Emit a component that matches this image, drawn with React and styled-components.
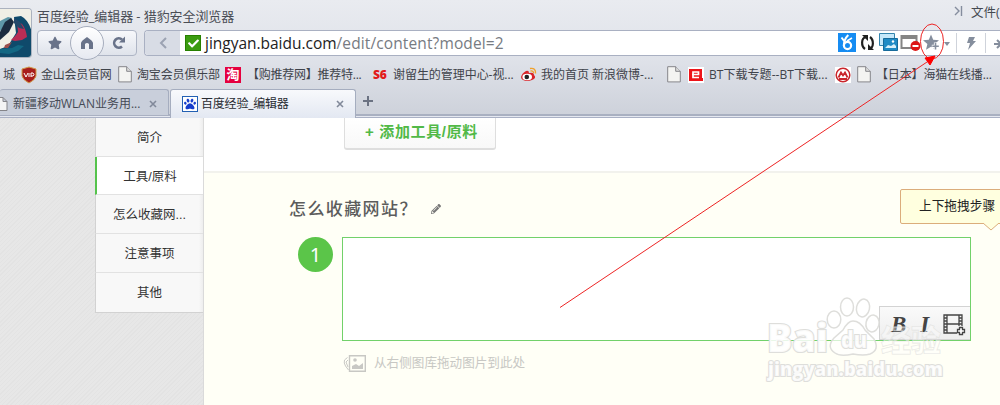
import styled, { createGlobalStyle } from "styled-components";
import {
  FaStar,
  FaCheck,
  FaPaw,
  FaPencilAlt,
} from "react-icons/fa";

const sidebar = ["简介", "工具/原料", "怎么收藏网...", "注意事项", "其他"];

const bookmarks = [
  { text: "城", x: 3, width: 21 },
  { icon: "vip", text: "金山会员官网", x: 20, width: 97, spacing: -0.25 },
  { icon: "doc", text: "淘宝会员俱乐部", x: 19, width: 107, spacing: -0.15 },
  { icon: "tao", text: "【购推荐网】推荐特...", x: 22, width: 148, spacing: -0.25 },
  { icon: "s6", text: "谢留生的管理中心-视...", x: 20, width: 147, spacing: -0.05 },
  { icon: "weibo", text: "我的首页 新浪微博-...", x: 21, width: 147, spacing: 0 },
  { icon: "doc", width: 21 },
  { icon: "e", text: "BT下载专题--BT下载...", x: 21, width: 147, spacing: 0.05 },
  { icon: "cmb", width: 22 },
  { icon: "doc", text: "【日本】海猫在线播...", x: 19, width: 143, spacing: -0.15 },
];

function BookmarkIcon({ name }) {
  switch (name) {
    case "vip":
      return (
        <svg width="16" height="18" viewBox="0 0 16 18">
          <path d="M1 3 8 1l7 2v7q-1 4-7 7-6-3-7-7z" fill="#a81e1c" stroke="#d29b4b" />
          <path d="m3 7 2 4 2-4m1 0v4m2 0V7h2q2 2 0 3h-2" fill="none" stroke="#fff" />
        </svg>
      );
    case "doc":
      return (
        <svg width="14" height="17" viewBox="0 0 14 17">
          <path d="M.7.7h8l4.6 4.6v10.6H.7z" fill="#f4f4f2" stroke="#85858a" />
          <path d="M8.7.7v4.6h4.6" fill="#ddd" stroke="#85858a" />
        </svg>
      );
    case "tao":
      return <TaoIcon>淘</TaoIcon>;
    case "s6":
      return <SixIcon>S6</SixIcon>;
    case "weibo":
      return (
        <svg width="17" height="16" viewBox="0 0 17 16">
          <path d="M1 10q1-4 5-6 3-1 3 2 5-1 5 2 3 3-2 5-5 2-9 0-2-1-2-3z" fill="#d9252a" />
          <ellipse cx="7.2" cy="10" rx="4.8" ry="3.2" fill="#fff" />
          <circle cx="6.8" cy="10" r="2.3" fill="#222" />
          <path d="M10 1.5q6-1 5.5 5M10.5 4q3-.5 3 2" fill="none" stroke="#f0a12b" strokeWidth="1.4" />
        </svg>
      );
    case "e":
      return (
        <svg width="16" height="16" viewBox="0 0 16 16">
          <path d="M0 0h16v16H0z" fill="#fff" />
          <path d="M1 2h13v9h1v3H1z" fill="#ed1419" />
          <path d="M4 7.5h6.5V5H5v5.5h6" fill="none" stroke="#fff" strokeWidth="1.7" />
        </svg>
      );
    case "cmb":
      return (
        <svg width="16" height="16" viewBox="0 0 16 16">
          <path d="M0 0h16v16H0z" fill="#fff" />
          <circle cx="8" cy="8" r="6.8" fill="#fff" stroke="#c9252c" strokeWidth="1.5" />
          <path d="m3.5 10.5 2.5-5 2 3 2-3 2.5 5M4 12h8" fill="none" stroke="#c9252c" strokeWidth="1.8" />
        </svg>
      );
    default:
      return null;
  }
}

function Browser() {
  return (
    <Chrome>
      <TitleRow>
        <Title>百度经验_编辑器 - 猎豹安全浏览器</Title>
        <Menu>
          <svg width="9" height="10" viewBox="0 0 9 10">
            <path d="m1 1 4 4-4 4M7.5 0v10" fill="none" stroke="#858d9e" strokeWidth="1.4" />
          </svg>
          <span>文件(</span>
        </Menu>
      </TitleRow>
      <Avatar>
        <svg width="32" height="49" viewBox="0 0 32 49">
          <path d="M0 0h32v49H0z" fill="#f0efe6" />
          <path d="m14 8 7-1q8 4 11 17v25H0v-9l8-3 8-13z" fill="#0f4a6b" />
          <path d="M0 12 8 8l4 1-4 6-8 7z" fill="#5f97a8" />
          <path d="m5 13 6-4 3 4-5 10-9 8v-8z" fill="#1c2c40" />
          <path d="m17 12 5 3q4 5 5 13l-5 3-7 1-4-1 5-5 2-3z" fill="#b92d55" />
          <path d="m14 9 6 4 4 7-5-1-5-5z" fill="#26486a" />
          <path d="m5 36 7-3-4 6H4z" fill="#9a4e4c" />
          <path d="m0 40 12-1 6-3 6 1-6 5-9 3-9-1z" fill="#136783" />
        </svg>
      </Avatar>
      <Toolbar>
        <NavGroup>
          <FaStar size={14} />
          <HomeButton>
            <svg width="14" height="15" viewBox="0 0 14 15">
              <path d="M1 13V7q0-2 6-6 6 4 6 6v6H9V8q-2-2-4 0v5z" fill="#69738a" />
            </svg>
          </HomeButton>
          <svg width="15" height="14" viewBox="0 0 15 14">
            <path d="M11 10.5a4.7 4.7 0 1 1 0-7" fill="none" stroke="#69738a" strokeWidth="2.6" />
            <path d="M8 6.5h6V.5z" fill="#69738a" />
          </svg>
        </NavGroup>
        <AddressBar>
          <BackButton>
            <svg width="8" height="12" viewBox="0 0 8 12">
              <path d="M7 1 2 6l5 5" fill="none" stroke="#9ba2b2" strokeWidth="2" />
            </svg>
          </BackButton>
          <Secure>
            <FaCheck size={11} />
          </Secure>
          <Url>
            jingyan.baidu.com<UrlPath>/edit/content?model=2</UrlPath>
          </Url>
          <Tools />
        </AddressBar>
      </Toolbar>
      <Bookmarks>
        {bookmarks.map((item, index) => (
          <Bookmark key={index} $width={item.width}>
            <IconSlot $width={item.x}>
              <BookmarkIcon name={item.icon} />
            </IconSlot>
            {item.text && <Label $spacing={item.spacing}>{item.text}</Label>}
          </Bookmark>
        ))}
      </Bookmarks>
      <Tabs>
        <Tab>
          <svg width="8" height="14" viewBox="0 0 8 14">
            <path d="M-3 .5h6l4 4v9H-3M3 .5v4h4" fill="#f4f4f4" stroke="#85858a" />
          </svg>
          <TabLabel>新疆移动WLAN业务用...</TabLabel>
          <Close />
        </Tab>
        <Tab $active>
          <BaiduIcon>
            <FaPaw size={12} />
          </BaiduIcon>
          <TabLabel $active>百度经验_编辑器</TabLabel>
          <Close />
        </Tab>
        <NewTab>
          <svg width="10" height="10" viewBox="0 0 10 10">
            <path d="M5 0v10M0 5h10" stroke="#6b7282" strokeWidth="2" />
          </svg>
        </NewTab>
      </Tabs>
    </Chrome>
  );
}

function Close() {
  return (
    <svg width="8" height="8" viewBox="0 0 8 8">
      <path d="m1 1 6 6m0-6L1 7" stroke="#81899a" strokeWidth="1.6" />
    </svg>
  );
}

function Tools() {
  return (
    <ToolIcons width="162" height="24" viewBox="0 0 162 24">
      <path d="M0 2h18v19H0z" fill="#168cf2" />
      <circle cx="9.5" cy="14.5" r="3.6" fill="none" stroke="#fff" strokeWidth="2.2" />
      <path d="M5.8 14.500q0-6 4.500-10.500M3.500 6.500l3 4" fill="none" stroke="#fff" strokeWidth="2" />
      <path d="m9 10 5-3" stroke="#fff" strokeWidth="1.500" />
      <path d="M28 6c-5 1-5 9-1 12m4 0c5-1 5-9 1-12" fill="none" stroke="#202020" strokeWidth="2.2" />
      <path d="M24 4h6v6zM36 19h-6v-6z" fill="#202020" />
      <path d="M41.5 2.5h15v12h-15z" fill="#c6e8fa" stroke="#3485ae" />
      <path d="M45.5 7.5h14v12h-14z" fill="#208bc5" stroke="#176b9b" />
      <path d="m47 17 3-3 3 1 3-2 2 2v2z" fill="#d8f0fa" />
      <circle cx="55" cy="10.5" r="1.2" fill="#fff" />
      <path d="M63.5 5h15v12h-15z" fill="#fff" stroke="#858585" strokeWidth="2" />
      <path d="M63 4h16v4H63z" fill="#858585" />
      <circle cx="77.5" cy="15" r="5" fill="#dc1717" />
      <path d="M74.5 15h6" stroke="#fff" strokeWidth="2" />
      <path d="m93 3.500 2.200 5.200 5.800.5-4.400 3.800 1.400 5.800-5-3.100-5 3.100 1.400-5.800L85 9.200l5.800-.5z" fill="#858e9d" />
      <path d="M97.500 11.500v7.500m-3.700-3.700h7.500" stroke="#fff" strokeWidth="3.200" />
      <path d="M97.500 12v6.500m-3.200-3.200h6.500" stroke="#858e9d" strokeWidth="1.600" />
      <path d="M106 11h6l-3 4z" fill="#858e9d" />
      <path d="M118.5 2v20M147.5 2v20" stroke="#cfd3db" />
      <path d="M131 6h6l-2 4h3l-8 9 2-7h-3z" fill="#858e9d" />
      <path d="M156 13h6m-3-4 4 4-4 4" fill="none" stroke="#858e9d" strokeWidth="2" />
    </ToolIcons>
  );
}

function Editor() {
  return (
    <Page>
      <Gutter>
        <Sidebar>
          {sidebar.map((item, index) => (
            <SidebarItem key={item} $active={index === 1}>
              {item}
            </SidebarItem>
          ))}
        </Sidebar>
      </Gutter>
      <Main>
        <MaterialSection>
          <AddButton>+ 添加工具/原料</AddButton>
        </MaterialSection>
        <StepSection>
          <HeadingRow>
            <Heading>怎么收藏网站？</Heading>
            <FaPencilAlt size={10} color="#777" />
          </HeadingRow>
          <StepRow>
            <Number>1</Number>
            <StepBox>
              <FormatBar>
                <FormatLetter>B</FormatLetter>
                <FormatLetter>I</FormatLetter>
                <svg width="23" height="22" viewBox="0 0 23 22">
                  <path d="M14 19H1V1h18v11M4 1v18M16 1v11M4 10h12M1 4h3M1 7h3m-3 3h3m-3 3h3m-3 3h3M16 4h3m-3 3h3m-3 3h3" fill="none" stroke="#444" strokeWidth="1.3" />
                  <path d="M16.5 13.5h3v2h2v3h-2v2h-3v-2h-2v-3h2z" fill="#fff" stroke="#444" strokeWidth="1.3" />
                </svg>
              </FormatBar>
            </StepBox>
          </StepRow>
          <ImageHint>
            <svg width="23" height="17" viewBox="0 0 23 17">
              <path d="M6.5.7h15.8v15.6H6.5z" fill="none" stroke="#c8c8c4" strokeWidth="1.4" />
              <path d="M9 14v-3l4-2 3 2 4-3v6z" fill="#c8c8c4" />
              <path d="M4.500 2.500 1.500 5q-1 3 1 6l3 4M5 5 3 7l2 5" fill="none" stroke="#c8c8c4" />
              <circle cx="12" cy="5" r="1.8" fill="#c8c8c4" />
            </svg>
            从右侧图库拖动图片到此处
          </ImageHint>
        </StepSection>
      </Main>
      <Tooltip>
        上下拖拽步骤
        <Tail width="18" height="9" viewBox="0 0 18 9">
          <path d="m1 0 8 7 8-7" fill="#ffffdf" stroke="#dbad7b" />
        </Tail>
      </Tooltip>
    </Page>
  );
}

function Watermark() {
  return (
    <WatermarkArt width="240" height="100" viewBox="0 0 240 100">
      <g fill="#fff" fillOpacity=".7" stroke="#dededb" strokeWidth="1.5">
        <ellipse cx="94" cy="24.500" rx="6.800" ry="8.500" />
        <ellipse cx="107" cy="12" rx="6.5" ry="9" />
        <ellipse cx="123" cy="13" rx="6.5" ry="9" transform="rotate(12 123 13)" />
        <ellipse cx="132.500" cy="28.500" rx="6.5" ry="8.500" transform="rotate(12 132.500 28.500)" />
        <path d="M113 26q7 0 12 9l9 9q6 11-4 15-6 2-17 0-13 3-18-1-9-6-1-15l9-8q5-9 10-9z" />
      </g>
      <MarkText x="27" y="57" $size={39} textLength="61" lengthAdjust="spacingAndGlyphs">Bai</MarkText>
      <MarkText x="101" y="53" $size={23} textLength="26" lengthAdjust="spacingAndGlyphs">du</MarkText>
      <MarkText x="141" y="56" $size={30} $clear textLength="60" lengthAdjust="spacingAndGlyphs">经验</MarkText>
      <MarkText x="28" y="81" $size={20} textLength="175" lengthAdjust="spacingAndGlyphs">jingyan.baidu.com</MarkText>
    </WatermarkArt>
  );
}

function App() {
  return (
    <Window>
      <GlobalStyle />
      <Browser />
      <Editor />
      <Watermark />
      <Annotation width="1000" height="405" viewBox="0 0 1000 405">
        <ellipse cx="932" cy="41.5" rx="11.5" ry="17.5" fill="none" stroke="#ed2424" />
        <path d="M560 307.5 930 60" fill="none" stroke="#ed2424" />
        <path d="m935 56-5 9-5-7z" fill="#f00" stroke="#f00" />
      </Annotation>
    </Window>
  );
}

export default App;

const GlobalStyle = createGlobalStyle`
  * {
    box-sizing: border-box;
  }

  body {
    margin: 0;
    overflow: hidden;
    font-family: "Open Sans", "Noto Sans CJK SC", sans-serif;
  }

  svg {
    display: block;
    flex-shrink: 0;
  }
`;

const Window = styled.div`
  position: relative;
  width: 1000px;
  height: 405px;
  overflow: hidden;
`;

const Chrome = styled.header`
  position: relative;
  height: 118px;
  background: linear-gradient(#e9ebf0, #dfe2e9 50%, #ced2db 96%);
`;

const TitleRow = styled.div`
  height: 30px;
  padding-left: 37px;
  display: flex;
  justify-content: space-between;
`;

const Title = styled.span`
  padding-top: 6px;
  font-size: 13px;
  line-height: 20px;
  letter-spacing: -0.08px;
  color: #4a4d55;
  white-space: nowrap;
`;

const Menu = styled.div`
  width: 46px;
  padding-top: 6px;
  display: flex;
  gap: 8px;
  font-size: 12.5px;
  line-height: 13px;
  color: #454950;
  white-space: nowrap;
`;

const Avatar = styled.div`
  position: absolute;
  top: 8px;
  left: 0;
  width: 32px;
  height: 50px;
  overflow: hidden;
  border: 1px solid #abb2bf;
  border-left: 0;
  border-radius: 0 4px 4px 0;
`;

const Toolbar = styled.div`
  height: 26px;
  padding-left: 37px;
  display: flex;
  gap: 7px;
`;

const NavGroup = styled.div`
  width: 100px;
  padding: 0 10px;
  display: flex;
  align-items: center;
  justify-content: space-between;
  color: #69738a;
  background: linear-gradient(#f7f8fb, #dfe3eb);
  border: 1px solid #aeb5c5;
  border-radius: 4px;
`;

const HomeButton = styled.div`
  width: 34px;
  height: 34px;
  flex-shrink: 0;
  display: flex;
  align-items: center;
  justify-content: center;
  background: linear-gradient(#fff, #e6e9f1);
  border: 1px solid #a6adbd;
  border-radius: 50%;
  z-index: 1;
`;

const AddressBar = styled.div`
  flex: 1;
  display: flex;
  align-items: center;
  overflow: hidden;
  background: #fff;
  border: 1px solid #a9b0c2;
  border-right: 0;
  border-radius: 4px 0 0 4px;
`;

const BackButton = styled.div`
  width: 35px;
  height: 24px;
  display: flex;
  align-items: center;
  justify-content: center;
  background: #d8dce5;
`;

const Secure = styled.div`
  width: 16px;
  height: 16px;
  margin: 0 4px 0 5px;
  display: flex;
  align-items: center;
  justify-content: center;
  color: #fff;
  background: #3b9c10;
  border: 1px solid #278000;
`;

const Url = styled.div`
  padding-top: 1px;
  font-size: 15.5px;
  line-height: 23px;
  letter-spacing: -0.02px;
  color: #222;
  white-space: nowrap;
`;

const UrlPath = styled.span`
  color: #777b82;
  letter-spacing: 0.12px;
`;

const ToolIcons = styled.svg`
  margin-left: auto;
`;

const Bookmarks = styled.div`
  height: 33px;
  padding-top: 4px;
  display: flex;
  align-items: center;
`;

const Bookmark = styled.div`
  width: ${(props) => props.$width}px;
  flex-shrink: 0;
  display: flex;
  align-items: center;
`;

const IconSlot = styled.div`
  width: ${(props) => props.$width || 14}px;
  flex-shrink: 0;
`;

const Label = styled.span`
  padding-top: 1px;
  font-size: 12px;
  line-height: 18px;
  letter-spacing: ${(props) => props.$spacing || 0}px;
  color: #3f434b;
  white-space: nowrap;
`;

const TaoIcon = styled.div`
  width: 16px;
  height: 16px;
  font-size: 13px;
  font-weight: 700;
  line-height: 15px;
  text-align: center;
  color: #fff;
  background: #e5003f;
`;

const SixIcon = styled.div`
  font-size: 12px;
  font-weight: 800;
  line-height: 16px;
  letter-spacing: -0.2px;
  color: #e21b1b;
`;

const Tabs = styled.div`
  height: 29px;
  display: flex;
  border-bottom: 1px solid #aab1c5;
  box-shadow: inset 0 -1px #e5e8f0, inset 0 -3px #a9b0c1;
`;

const Tab = styled.div`
  width: ${(props) => (props.$active ? "186px" : "169px")};
  height: ${(props) => (props.$active ? "29px" : "26px")};
  margin-left: ${(props) => (props.$active ? "1px" : "0")};
  padding: ${(props) => (props.$active ? "0 11px" : "2px 11px 0 0")};
  display: flex;
  align-items: center;
  background: ${(props) =>
    props.$active ? "linear-gradient(#f8f9fc, #e3e8f2)" : "#c9cfdb"};
  border: 1px solid #a5adbf;
  border-bottom: 0;
  border-left-width: ${(props) => (props.$active ? "1px" : "0")};
  border-radius: 3px 3px 0 0;

  & > svg:last-child {
    margin-left: auto;
  }
`;

const TabLabel = styled.span`
  margin-left: ${(props) => (props.$active ? "3px" : "5px")};
  font-size: 12px;
  line-height: 20px;
  letter-spacing: ${(props) => (props.$active ? "-0.2px" : "0")};
  color: ${(props) => (props.$active ? "#292c32" : "#454a55")};
  white-space: nowrap;
`;

const BaiduIcon = styled.div`
  width: 16px;
  height: 16px;
  display: flex;
  align-items: center;
  justify-content: center;
  color: #163dcc;
  background: #fff;
  border: 1px solid #2360b3;
`;

const NewTab = styled.div`
  padding: 7px;
`;

const Page = styled.main`
  position: relative;
  height: 287px;
  display: flex;
  font-family: "Liberation Sans", "Noto Sans CJK SC", sans-serif;
`;

const Gutter = styled.div`
  width: 204px;
  padding-left: 95px;
  flex-shrink: 0;
  background: repeating-linear-gradient(135deg, #e3e3e3 0 1px, #e7e7e7 1px 3px);
  border-right: 1px solid #dadada;
`;

const Sidebar = styled.nav`
  border: 1px solid #d2d2d2;
  border-top: 0;
  border-right: 0;
`;

const SidebarItem = styled.div`
  height: ${(props) => (props.$active ? "38px" : "39px")};
  margin-left: -1px;
  border-left: ${(props) =>
    props.$active ? "2px solid #55c34c" : "1px solid #d2d2d2"};
  border-bottom: 1px solid #e2e2e2;
  background: ${(props) =>
    props.$active ? "#fff" : "linear-gradient(90deg, #f8f8f8 96%, #eee)"};
  font-size: 12.5px;
  line-height: 40px;
  text-align: center;
  color: #333;

  &:last-child {
    border-bottom: 0;
  }
`;

const Main = styled.section`
  flex: 1;
  display: flex;
  flex-direction: column;
`;

const MaterialSection = styled.div`
  height: 55px;
  padding-left: 140px;
  background: #fff;
  border-bottom: 2px solid #f2f2ed;
`;

const AddButton = styled.div`
  width: 152px;
  height: 32px;
  padding-left: 20px;
  font-size: 15px;
  font-weight: 700;
  line-height: 27px;
  letter-spacing: 0.65px;
  color: #51b947;
  white-space: nowrap;
  background: linear-gradient(#fff, #f8f8f8);
  border: 1px solid #dedede;
  border-top: 0;
  border-bottom-width: 2px;
  border-radius: 0 0 3px 3px;
`;

const StepSection = styled.div`
  flex: 1;
  background: #fffff6;
`;

const HeadingRow = styled.div`
  height: 64px;
  padding: 8px 0 0 85px;
  display: flex;
  align-items: center;
  gap: 13px;
`;

const Heading = styled.h2`
  width: 129px;
  margin: 0;
  padding-top: 2px;
  font-size: 17px;
  font-weight: 500;
  letter-spacing: 1.4px;
  line-height: 24px;
  color: #5c5c5c;
  white-space: nowrap;
`;

const StepRow = styled.div`
  padding-left: 94px;
  display: flex;
  gap: 9px;
`;

const Number = styled.div`
  width: 35px;
  height: 35px;
  border-radius: 50%;
  font-family: "Noto Sans", sans-serif;
  font-size: 20px;
  line-height: 35px;
  text-align: center;
  color: #fff;
  background: #5bc549;
`;

const StepBox = styled.div`
  width: 629px;
  height: 104px;
  display: flex;
  align-items: flex-end;
  justify-content: flex-end;
  background: #fff;
  border: 1px solid #72d16a;
`;

const FormatBar = styled.div`
  width: 91px;
  height: 34px;
  padding: 4px 4px 0 11px;
  display: flex;
  align-items: center;
  justify-content: space-between;
  background: linear-gradient(#fafafa, #eee);
  border: 1px solid #d3d3d3;
  border-right: 0;
`;

const FormatLetter = styled.span`
  font-family: "Liberation Serif", serif;
  font-size: 23px;
  font-weight: 700;
  font-style: italic;
  color: #444;
`;

const ImageHint = styled.div`
  padding: 14px 0 0 139px;
  display: flex;
  align-items: center;
  gap: 8px;
  font-size: 12.6px;
  line-height: 17px;
  color: #c8c8c4;
`;

const Tooltip = styled.div`
  position: absolute;
  top: 71px;
  left: 900px;
  width: 110px;
  height: 35px;
  padding-left: 18px;
  font-size: 12.7px;
  line-height: 33px;
  color: #222;
  background: #ffffdf;
  border: 1px solid #dbad7b;
  border-radius: 2px;
`;

const Tail = styled.svg`
  position: absolute;
  top: 33px;
  left: 81px;
`;

const WatermarkArt = styled.svg`
  position: absolute;
  top: 295px;
  left: 740px;
`;

const MarkText = styled.text`
  font-family: "Open Sans", "Noto Sans CJK SC", sans-serif;
  font-size: ${(props) => props.$size}px;
  font-weight: 800;
  fill: #fff;
  fill-opacity: ${(props) => (props.$clear ? 0.35 : 0.85)};
  stroke: #dededb;
  stroke-width: ${(props) => (props.$clear ? 0.8 : 2.2)}px;
  stroke-opacity: ${(props) => (props.$clear ? 0.75 : 1)};
  paint-order: stroke;
`;

const Annotation = styled.svg`
  position: absolute;
  top: 0;
  left: 0;
  pointer-events: none;
`;
